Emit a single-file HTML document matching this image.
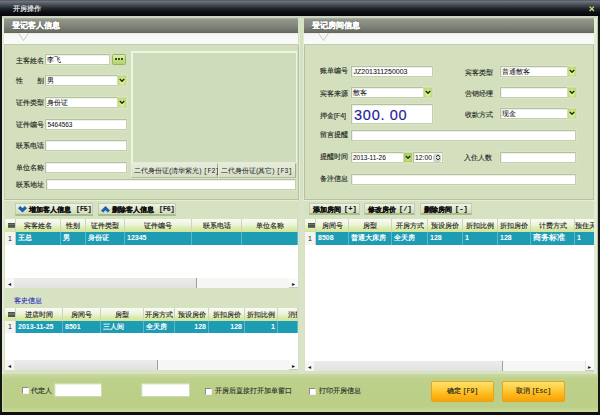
<!DOCTYPE html>
<html><head><meta charset="utf-8">
<style>
*{box-sizing:border-box;margin:0;padding:0}
html,body{width:600px;height:415px;overflow:hidden}
body{position:relative;background:#d5e1c3;font-family:"Liberation Sans",sans-serif;font-size:7px;color:#222}
.a{position:absolute}
.t{position:absolute;white-space:nowrap;line-height:8px;font-size:7px;color:#22261f;-webkit-text-stroke:0.12px #22261f}
.inp{position:absolute;background:#fff;border:1px solid #b4c09e;border-right-color:#c4cfb0;border-bottom-color:#c4cfb0;box-shadow:inset 1px 1px 0 #eef1e8,0 0 0 0.5px #dfe8d0}
.dd{position:absolute;right:-1px;top:-1px;bottom:-1px;width:10px;background:radial-gradient(ellipse at 50% 60%,#eaf6c0 0,#c6e07e 60%,#b4d062 100%);border:1px solid #cfe0a8}

.it{position:absolute;left:1px;top:0px;line-height:9px;font-size:7px;color:#111;white-space:nowrap;-webkit-text-stroke:0.05px #111}
.hdr{position:absolute;height:15px;background:linear-gradient(#aeb2a6 0,#92968a 12%,#80847a 55%,#6a6e64 90%,#5e6258 100%)}
.hdr span{position:absolute;left:8px;top:3px;font-size:8.3px;font-weight:bold;color:#fff;line-height:9px;letter-spacing:0;-webkit-text-stroke:0.25px #fff;text-shadow:0 0 1.5px #333;font-family:"Liberation Serif",serif}
.strip{position:absolute;height:12px;background:linear-gradient(#e4e8de 0,#f6f7f4 1.5px,#fafbf8 100%);border-bottom:1px solid #c3c8b8}
.btn{position:absolute;height:12px;background:linear-gradient(#eef3e2,#d2dcc0);border:1px solid #c2ccae;border-bottom:2px solid #a9bd88;font-size:7px;font-weight:bold;line-height:9px;color:#1a1a1a;white-space:nowrap}
.grid{position:absolute;background:#fff;overflow:hidden}
.gh{position:absolute;top:0;height:13px;background:linear-gradient(#f8fbf2 0%,#eef5dd 40%,#d9eba9 75%,#cfe59b 100%);border-right:1px solid #cdd2c4;font-size:7px;line-height:13px;text-align:center;color:#2a2a2a;-webkit-text-stroke:0.15px #2a2a2a;white-space:nowrap;overflow:hidden}
.gr{position:absolute;height:13px;background:#1d9cb4;border-right:1px solid #5cb8c8;color:#fff;font-size:7px;line-height:12px;font-weight:bold;white-space:nowrap;overflow:hidden;padding-left:2px}
.sb{position:absolute;height:9px;background:#f6f6f4}
.chk{position:absolute;width:7px;height:7px;background:#fff;border:1px solid #8a8a8a;border-right-color:#eee;border-bottom-color:#eee}
</style></head><body>

<!-- title bar -->
<div class="a" style="left:0;top:0;width:600px;height:16px;background:linear-gradient(#50545e 0px,#6e727a 1.5px,#5c6068 3px,#3c4149 6px,#1d2129 9px,#0d0f15 12px,#05060a 16px)"></div>
<div class="t" style="left:12.5px;top:5px;color:#f2f2f2;-webkit-text-stroke:0.15px #f2f2f2;font-size:7px">开房操作</div>
<svg class="a" style="left:589px;top:5.5px" width="6" height="6"><path d="M0.6 0.6 L5 5 M5 0.6 L0.6 5" stroke="#c6e07a" stroke-width="1.3"/></svg>

<!-- window borders -->
<div class="a" style="left:0;top:16px;width:2px;height:399px;background:#151515"></div><div class="a" style="left:2px;top:374px;width:1px;height:37px;background:#cfdfa8"></div>
<div class="a" style="left:598px;top:16px;width:2px;height:399px;background:#151515"></div>
<div class="a" style="left:0;top:412px;width:600px;height:3px;background:#101010"></div><div class="a" style="left:2px;top:411px;width:596px;height:1px;background:#cadb9e"></div>
<div class="a" style="left:2px;top:16px;width:596px;height:2px;background:#cdd5c3"></div>

<!-- LEFT PANEL -->
<div class="a" style="left:4px;top:45px;width:294px;height:329px;background:#d3dfbd"></div>
<div class="hdr" style="left:4px;top:18px;width:294px"><span>登记客人信息</span></div>
<div class="strip" style="left:4px;top:33px;width:294px"></div>
<svg class="a" style="left:17.5px;top:33px" width="12" height="9"><path d="M0.5 0 L5.5 7.5 L10.5 0" fill="#f7f8f5" stroke="#c7cabd" stroke-width="1"/></svg>

<!-- group box bottom line -->
<div class="a" style="left:4px;top:200px;width:294px;height:1px;background:#e6eedb"></div>
<div class="a" style="left:4px;top:45px;width:295px;height:155px;border-left:1px solid #c3cfb0;border-right:1px solid #b5c1a1;border-bottom:1px solid #b5c1a1"></div>
<div class="a" style="left:4px;top:201px;width:294px;height:173px;background:#d6e2c2"></div>

<div class="t" style="left:16px;top:57px">主客姓名</div>
<div class="inp" style="left:45px;top:54px;width:65px;height:11px"><span class="it">李飞</span></div>
<div class="a" style="left:112px;top:54px;width:14px;height:11px;background:linear-gradient(#dcefb0,#b2d262);border:1px solid #98b460;border-radius:1.5px;box-shadow:0 0 1px #c8dc98"></div>
<div class="a" style="left:114.8px;top:57.6px;width:2.4px;height:2.4px;background:#111;border-radius:1.2px;box-shadow:3px 0 0 #111,6px 0 0 #111"></div>

<div class="t" style="left:16px;top:77px"><span>性</span><span style="position:absolute;left:20.5px">别</span></div>
<div class="inp" style="left:45px;top:75px;width:82px;height:11px"><span class="it">男</span><div class="dd"><svg class="a" style="left:0;top:0" width="8" height="9"><path d="M1.8 3 L4 5.2 L6.2 3" stroke="#1c2c12" stroke-width="1.5" fill="none"/></svg></div></div>

<div class="t" style="left:16px;top:99px">证件类型</div>
<div class="inp" style="left:45px;top:97px;width:82px;height:11px"><span class="it">身份证</span><div class="dd"><svg class="a" style="left:0;top:0" width="8" height="9"><path d="M1.8 3 L4 5.2 L6.2 3" stroke="#1c2c12" stroke-width="1.5" fill="none"/></svg></div></div>

<div class="t" style="left:16px;top:121px">证件编号</div>
<div class="inp" style="left:45px;top:119px;width:82px;height:11px"><span class="it" style="font-size:6.4px;top:0px;left:1.5px">5464563</span></div>

<div class="t" style="left:16px;top:142px">联系电话</div>
<div class="inp" style="left:45px;top:140px;width:82px;height:11px"></div>

<div class="t" style="left:16px;top:164px">单位名称</div>
<div class="inp" style="left:45px;top:162px;width:82px;height:11px"></div>

<div class="t" style="left:16px;top:181px">联系地址</div>
<div class="inp" style="left:46px;top:179px;width:250px;height:11px"></div>

<!-- photo box -->
<div class="a" style="left:131px;top:51px;width:166px;height:112px;background:#cfdcbb;border-left:2px solid #eef5e4;border-top:2px solid #eef5e4;border-right:1.5px solid #eef5e4;border-bottom:1px solid #e4ecd8"></div>
<div class="btn" style="left:131px;top:163px;width:87px;height:15px;font-weight:normal;line-height:13px;padding-left:2px;border:1px solid #e6ecdc;border-right:1px solid #a4ac94;border-bottom:1px solid #b4bca4;background:linear-gradient(#e6ecda,#d6dec6)">二代身份证(清华紫光) <span style="font-family:'Liberation Mono',monospace;font-size:6.5px">[F2]</span></div>
<div class="btn" style="left:218px;top:163px;width:78px;height:15px;font-weight:normal;line-height:13px;padding-left:2px;border:1px solid #e6ecdc;border-right:1px solid #a4ac94;border-bottom:1px solid #b4bca4;background:linear-gradient(#e6ecda,#d6dec6)">二代身份证(其它) <span style="font-family:'Liberation Mono',monospace;font-size:6.5px">[F3]</span></div>

<!-- guest buttons -->
<div class="btn" style="left:15px;top:203px;width:78px;height:13px"><svg class="a" style="left:1.5px;top:2px" width="9" height="7"><path d="M0 2.2 L2.2 0 L4.5 2.3 L6.8 0 L9 2.2 L4.5 6.6 Z" fill="#1f5ea8"/></svg><span class="a" style="left:12.5px;top:1px;-webkit-text-stroke:0.2px #111">增加客人信息</span><span class="a" style="left:60px;top:1px;font-family:'Liberation Mono',monospace;font-size:6.5px;-webkit-text-stroke:0.2px #111">[F5]</span></div>
<div class="btn" style="left:98px;top:203px;width:78px;height:13px"><svg class="a" style="left:1.5px;top:2px" width="9" height="7"><path d="M0 4.4 L2.2 6.6 L4.5 4.3 L6.8 6.6 L9 4.4 L4.5 0 Z" fill="#1f5ea8"/></svg><span class="a" style="left:12.5px;top:1px;-webkit-text-stroke:0.2px #111">删除客人信息</span><span class="a" style="left:60px;top:1px;font-family:'Liberation Mono',monospace;font-size:6.5px;-webkit-text-stroke:0.2px #111">[F6]</span></div>

<!-- guest grid -->
<div class="grid" style="left:5px;top:219px;width:293px;height:69px">
  <div class="gh" style="left:0;width:11px"></div>
  <div class="a" style="left:2.5px;top:4px;width:7.5px;height:4.5px;background:repeating-linear-gradient(#4e564c 0,#4e564c 1px,#6a7268 1px,#6a7268 1.5px)"></div>
  <div class="gh" style="left:11px;width:45px">宾客姓名</div>
  <div class="gh" style="left:56px;width:25px">性别</div>
  <div class="gh" style="left:81px;width:39px">证件类型</div>
  <div class="gh" style="left:120px;width:67px">证件编号</div>
  <div class="gh" style="left:187px;width:50px">联系电话</div>
  <div class="gh" style="left:237px;width:56px">单位名称</div>
  <div class="a" style="left:0;top:13px;width:11px;height:13px;background:#f4f4f0;border-right:1px solid #ccc;font-size:7px;line-height:13px;text-align:center">1</div>
  <div class="gr" style="left:11px;top:13px;width:45px">王总</div>
  <div class="gr" style="left:56px;top:13px;width:25px">男</div>
  <div class="gr" style="left:81px;top:13px;width:39px">身份证</div>
  <div class="gr" style="left:120px;top:13px;width:67px">12345</div>
  <div class="gr" style="left:187px;top:13px;width:50px"></div>
  <div class="gr" style="left:237px;top:13px;width:56px"></div>
  <div class="sb" style="left:0;top:59px;width:293px;height:10px"></div>
  <div class="a" style="left:9px;top:59px;width:183px;height:10px;background:linear-gradient(#ececea,#e2e2e0);border-right:1px solid #a0a09c"></div>
  <div class="a" style="left:3px;top:61.5px;font-size:6px;line-height:6px;color:#111">◂</div>
  <div class="a" style="left:284px;top:59px;width:9px;height:10px;background:#fafafa;border-bottom:1px solid #c8c8c4"></div>
  <div class="a" style="left:287px;top:61.5px;font-size:6px;line-height:6px;color:#111">▸</div>
</div>

<!-- history -->
<div class="t" style="left:14px;top:297px;color:#2a2ac0;-webkit-text-stroke:0.1px #2a2ac0;font-size:7px">客史信息</div>
<div class="grid" style="left:5px;top:308px;width:293px;height:62px">
  <div class="gh" style="left:0;width:11px"></div>
  <div class="a" style="left:2.5px;top:4px;width:7.5px;height:4.5px;background:repeating-linear-gradient(#4e564c 0,#4e564c 1px,#6a7268 1px,#6a7268 1.5px)"></div>
  <div class="gh" style="left:11px;width:47px">进店时间</div>
  <div class="gh" style="left:58px;width:38px">房间号</div>
  <div class="gh" style="left:96px;width:43px">房型</div>
  <div class="gh" style="left:139px;width:31px">开房方式</div>
  <div class="gh" style="left:170px;width:34px">预设房价</div>
  <div class="gh" style="left:204px;width:36px">折扣房价</div>
  <div class="gh" style="left:240px;width:33px">折扣比例</div>
  <div class="gh" style="left:273px;width:20px;text-align:left;padding-left:10px">消费</div>
  <div class="a" style="left:0;top:13px;width:11px;height:12px;background:#f4f4f0;border-right:1px solid #ccc;font-size:7px;line-height:12px;text-align:center">1</div>
  <div class="gr" style="left:11px;top:13px;width:47px;height:12px">2013-11-25</div>
  <div class="gr" style="left:58px;top:13px;width:38px;height:12px">8501</div>
  <div class="gr" style="left:96px;top:13px;width:43px;height:12px">三人间</div>
  <div class="gr" style="left:139px;top:13px;width:31px;height:12px">全天房</div>
  <div class="gr" style="left:170px;top:13px;width:34px;height:12px;text-align:right;padding-right:2px">128</div>
  <div class="gr" style="left:204px;top:13px;width:36px;height:12px;text-align:right;padding-right:2px">128</div>
  <div class="gr" style="left:240px;top:13px;width:33px;height:12px;text-align:right;padding-right:2px">1</div>
  <div class="gr" style="left:273px;top:13px;width:20px;height:12px"></div>
  <div class="sb" style="left:0;top:52px;width:293px;height:10px"></div>
  <div class="a" style="left:9px;top:52px;width:144px;height:10px;background:linear-gradient(#ececea,#e2e2e0);border-right:1px solid #a0a09c"></div>
  <div class="a" style="left:3px;top:54.5px;font-size:6px;line-height:6px;color:#111">◂</div>
  <div class="a" style="left:284px;top:52px;width:9px;height:10px;background:#fafafa;border-bottom:1px solid #c8c8c4"></div><div class="a" style="left:287px;top:54.5px;font-size:6px;line-height:6px;color:#111">▸</div>
</div>

<div class="a" style="left:299px;top:33px;width:1px;height:168px;background:#e2ebd4"></div>
<div class="a" style="left:303px;top:33px;width:1px;height:168px;background:#e2ebd4"></div><div class="a" style="left:299px;top:201px;width:5px;height:173px;background:#d8e3c8"></div>
<div class="a" style="left:2px;top:18px;width:2px;height:356px;background:#e2ebd4"></div>
<!-- RIGHT PANEL -->
<div class="a" style="left:304px;top:45px;width:290px;height:329px;background:#d3dfbd"></div>
<div class="a" style="left:594px;top:18px;width:4px;height:356px;background:#e3edd3;border-right:1px solid #bcc4b0"></div>
<div class="hdr" style="left:304px;top:18px;width:290px"><span>登记房间信息</span></div>
<div class="strip" style="left:304px;top:33px;width:290px"></div>
<svg class="a" style="left:317.5px;top:33px" width="12" height="9"><path d="M0.5 0 L5.5 7.5 L10.5 0" fill="#f7f8f5" stroke="#c7cabd" stroke-width="1"/></svg>

<div class="a" style="left:304px;top:200px;width:290px;height:1px;background:#e6eedb"></div>
<div class="a" style="left:304px;top:45px;width:290px;height:155px;border-left:1px solid #b5c1a1;border-right:1px solid #b5c1a1;border-bottom:1px solid #b5c1a1"></div>
<div class="a" style="left:304px;top:201px;width:290px;height:173px;background:#d6e2c2"></div>

<div class="t" style="left:320px;top:67px">账单编号</div>
<div class="inp" style="left:351px;top:66px;width:82px;height:11px"><span class="it" style="font-size:7px;left:1.5px">JZ201311250003</span></div>
<div class="t" style="left:465px;top:69px">宾客类型</div>
<div class="inp" style="left:500px;top:66px;width:77px;height:11px"><span class="it">普通散客</span><div class="dd"><svg class="a" style="left:0;top:0" width="8" height="9"><path d="M1.8 3 L4 5.2 L6.2 3" stroke="#1c2c12" stroke-width="1.5" fill="none"/></svg></div></div>

<div class="t" style="left:320px;top:90px">宾客来源</div>
<div class="inp" style="left:351px;top:87px;width:82px;height:11px"><span class="it">散客</span><div class="dd"><svg class="a" style="left:0;top:0" width="8" height="9"><path d="M1.8 3 L4 5.2 L6.2 3" stroke="#1c2c12" stroke-width="1.5" fill="none"/></svg></div></div>
<div class="t" style="left:465px;top:90px">营销经理</div>
<div class="inp" style="left:500px;top:87px;width:77px;height:11px"><div class="dd"><svg class="a" style="left:0;top:0" width="8" height="9"><path d="M1.8 3 L4 5.2 L6.2 3" stroke="#1c2c12" stroke-width="1.5" fill="none"/></svg></div></div>

<div class="t" style="left:320px;top:112px">押金[F4]</div>
<div class="inp" style="left:351px;top:104px;width:82px;height:20px"><span class="a" style="left:2px;top:2px;font-size:14.5px;line-height:16px;color:#1c1c9c;-webkit-text-stroke:0.15px #1c1c9c;font-family:'Liberation Sans',sans-serif;letter-spacing:0.8px">300.<span style="margin-left:4.3px">00</span></span></div>
<div class="t" style="left:465px;top:111px">收款方式</div>
<div class="inp" style="left:500px;top:108px;width:77px;height:11px"><span class="it">现金</span><div class="dd"><svg class="a" style="left:0;top:0" width="8" height="9"><path d="M1.8 3 L4 5.2 L6.2 3" stroke="#1c2c12" stroke-width="1.5" fill="none"/></svg></div></div>

<div class="t" style="left:320px;top:131px">留言提醒</div>
<div class="inp" style="left:351px;top:130px;width:225px;height:11px"></div>

<div class="t" style="left:320px;top:153px">提醒时间</div>
<div class="inp" style="left:351px;top:152px;width:62px;height:11px"><span class="it" style="font-size:6.5px;left:1px">2013-11-26</span><div class="dd" style="background:radial-gradient(ellipse at 50% 60%,#d4eaa0 0,#a8cc60 70%,#98c050 100%)"><svg class="a" style="left:0;top:0" width="8" height="9"><path d="M1.8 3 L4 5.2 L6.2 3" stroke="#1c2c12" stroke-width="1.5" fill="none"/></svg></div></div>
<div class="inp" style="left:413px;top:152px;width:30px;height:11px"><span class="it" style="font-size:6.8px;left:1px">12:00</span><div class="a" style="right:1px;top:1px;width:8px;height:8px;border-radius:3px;background:radial-gradient(#e8e8e4,#b8bcb4)"></div><svg class="a" style="left:21px;top:1px" width="6" height="8"><path d="M1 3 L3 1 L5 3 M1 4 L3 6 L5 4" fill="none" stroke="#333" stroke-width="1"/></svg></div>
<div class="t" style="left:464px;top:154px">入住人数</div>
<div class="inp" style="left:500px;top:152px;width:76px;height:11px"></div>

<div class="t" style="left:320px;top:175px">备注信息</div>
<div class="inp" style="left:351px;top:174px;width:225px;height:11px"></div>

<!-- room buttons -->
<div class="btn" style="left:309px;top:203px;width:51px;height:12px"><span class="a" style="left:2.5px;top:1px;-webkit-text-stroke:0.2px #111">添加房间</span><span class="a" style="left:34px;top:1px;font-family:'Liberation Mono',monospace;font-size:6.5px;letter-spacing:0.5px;-webkit-text-stroke:0.2px #111">[+]</span></div>
<div class="btn" style="left:364px;top:203px;width:51px;height:12px"><span class="a" style="left:2.5px;top:1px;-webkit-text-stroke:0.2px #111">修改房价</span><span class="a" style="left:34px;top:1px;font-family:'Liberation Mono',monospace;font-size:6.5px;letter-spacing:0.5px;-webkit-text-stroke:0.2px #111">[/]</span></div>
<div class="btn" style="left:420px;top:203px;width:52px;height:12px"><span class="a" style="left:2.5px;top:1px;-webkit-text-stroke:0.2px #111">删除房间</span><span class="a" style="left:34px;top:1px;font-family:'Liberation Mono',monospace;font-size:6.5px;letter-spacing:0.5px;-webkit-text-stroke:0.2px #111">[-]</span></div>

<!-- room grid -->
<div class="grid" style="left:305px;top:219px;width:289px;height:152px">
  <div class="gh" style="left:0;width:11px"></div>
  <div class="a" style="left:2.5px;top:4px;width:7.5px;height:4.5px;background:repeating-linear-gradient(#4e564c 0,#4e564c 1px,#6a7268 1px,#6a7268 1.5px)"></div>
  <div class="gh" style="left:11px;width:33px">房间号</div>
  <div class="gh" style="left:44px;width:43px">房型</div>
  <div class="gh" style="left:87px;width:36px">开房方式</div>
  <div class="gh" style="left:123px;width:35px">预设房价</div>
  <div class="gh" style="left:158px;width:35px">折扣比例</div>
  <div class="gh" style="left:193px;width:33px">折扣房价</div>
  <div class="gh" style="left:226px;width:44px">计费方式</div>
  <div class="gh" style="left:270px;width:20px">预住天数</div>
  <div class="a" style="left:0;top:13px;width:11px;height:13px;background:#f4f4f0;border-right:1px solid #ccc;font-size:7px;line-height:13px;text-align:center">1</div>
  <div class="gr" style="left:11px;top:13px;width:33px">8508</div>
  <div class="gr" style="left:44px;top:13px;width:43px">普通大床房</div>
  <div class="gr" style="left:87px;top:13px;width:36px">全天房</div>
  <div class="gr" style="left:123px;top:13px;width:35px">128</div>
  <div class="gr" style="left:158px;top:13px;width:35px">1</div>
  <div class="gr" style="left:193px;top:13px;width:33px">128</div>
  <div class="gr" style="left:226px;top:13px;width:44px;font-size:7.5px">商务标准</div>
  <div class="gr" style="left:270px;top:13px;width:20px">1</div>
  <div class="sb" style="left:0;top:142px;width:289px;height:10px"></div>
  <div class="a" style="left:9px;top:142px;width:189px;height:10px;background:linear-gradient(#ececea,#e2e2e0);border-right:1px solid #a0a09c"></div>
  <div class="a" style="left:3px;top:144.5px;font-size:6px;line-height:6px;color:#111">◂</div>
  <div class="a" style="left:280px;top:142px;width:9px;height:10px;background:#fafafa;border-bottom:1px solid #c8c8c4;border-left:1px solid #e0e0dc"></div><div class="a" style="left:283px;top:144.5px;font-size:6px;line-height:6px;color:#111">▸</div>
</div>

<!-- BOTTOM BAR -->
<div class="a" style="left:3px;top:374px;width:595px;height:37px;background:linear-gradient(#cad9a6 0,#bed18c 12%,#bccf88 60%,#bdd08a 90%,#c8da9a 100%)"></div>
<div class="chk" style="left:22px;top:387px"></div>
<div class="t" style="left:31px;top:386.5px;-webkit-text-stroke:0.1px #242822">代定人</div>
<div class="inp" style="left:55px;top:384px;width:46px;height:12px;border:none"></div>
<div class="inp" style="left:142px;top:384px;width:47px;height:12px;border:none"></div>
<div class="chk" style="left:205px;top:388px"></div>
<div class="t" style="left:215px;top:386.5px;font-size:6.6px;-webkit-text-stroke:0.1px #262a24">开房后直接打开加单窗口</div>
<div class="chk" style="left:309px;top:388px"></div>
<div class="t" style="left:318.5px;top:386.5px;font-size:6.8px;-webkit-text-stroke:0.1px #262a24">打印开房信息</div>

<div class="a" style="left:431px;top:381px;width:63px;height:21px;border-radius:2px;background:linear-gradient(#ffe070 0,#ffcc38 40%,#fdb418 70%,#f6a406 100%);border:1px solid #e8a418;box-shadow:0 0 1px #d8c070;font-size:7px;line-height:17px;text-align:center;color:#222;-webkit-text-stroke:0.15px #222">确定 <span style="font-family:'Liberation Mono',monospace;font-size:6.5px">[F9]</span></div>
<div class="a" style="left:502px;top:381px;width:63px;height:21px;border-radius:2px;background:linear-gradient(#ffe070 0,#ffcc38 40%,#fdb418 70%,#f6a406 100%);border:1px solid #e8a418;box-shadow:0 0 1px #d8c070;font-size:7px;line-height:17px;text-align:center;color:#222;-webkit-text-stroke:0.15px #222">取消 <span style="font-family:'Liberation Mono',monospace;font-size:6.5px">[Esc]</span></div>

</body></html>
